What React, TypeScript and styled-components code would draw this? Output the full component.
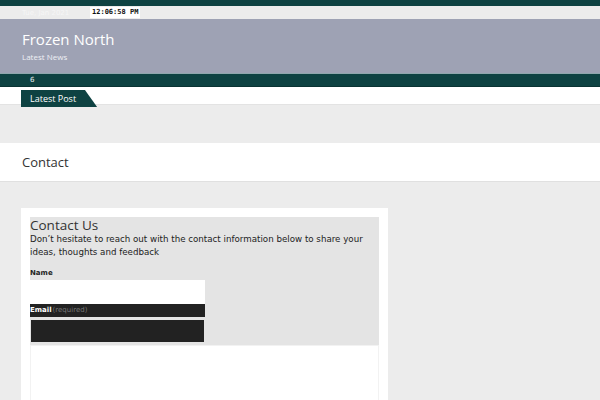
import React from 'react';
import styled, { createGlobalStyle } from 'styled-components';

const GlobalStyle = createGlobalStyle`
    html, body {
        margin: 0;
        padding: 0;
        background: #ececec;
        font-family: "DejaVu Sans", sans-serif;
    }
`;

const TopBar = styled.div`
    height: 6px;
    background: #0e4242;
`;
const InfoStrip = styled.div`
    height: 13px;
    background: #ececec;
    display: flex;
    align-items: center;
    padding-left: 22px;
    font-size: 7px;
    color: #f6f6f6;
`;
const DateText = styled.span`
    width: 68px;
`;
const Clock = styled.span`
    background: #fff;
    color: #111;
    font-family: "DejaVu Sans Mono", monospace;
    font-weight: bold;
    font-size: 7px;
    padding: 0 2px;
    line-height: 11px;
`;
const Header = styled.div`
    background: #9ea2b4;
    height: 55px;
    padding: 0 22px;
    box-sizing: border-box;
    border-bottom: 1px solid #8fa7ad;
`;
const SiteTitle = styled.div`
    font-family: "Open Sans", sans-serif;
    font-size: 15px;
    color: #fff;
    padding-top: 11px;
    line-height: 18px;
`;
const Tagline = styled.div`
    font-family: "Open Sans", sans-serif;
    font-size: 8px;
    color: #eef0f5;
    margin-top: 3px;
`;
const NavBar = styled.div`
    background: #0e4242;
    height: 12px;
    padding-left: 30px;
    font-size: 7px;
    line-height: 12px;
    color: #e8eeee;
    border-bottom: 1px solid #0a3333;
`;
const TabRow = styled.div`
    background: #fff;
    height: 17px;
    padding-left: 21px;
    border-bottom: 1px solid #e3e3e3;
`;
const Tab = styled.div`
    display: inline-block;
    background: #0e4242;
    color: #fff;
    font-family: "Open Sans", sans-serif;
    font-size: 9px;
    line-height: 17px;
    height: 17px;
    padding: 0 21px 0 9px;
    clip-path: polygon(0 0, 84% 0, 100% 100%, 0 100%);
`;
const Spacer = styled.div`
    height: 38px;
`;
const PageTitleBar = styled.div`
    background: #fff;
    height: 38px;
    padding-left: 22px;
    display: flex;
    align-items: center;
    border-bottom: 1px solid #e0e0e0;
    font-family: "Open Sans", sans-serif;
    font-size: 13px;
    color: #333;
`;
const Content = styled.div`
    padding: 26px 21px 0;
`;
const Card = styled.div`
    background: #fff;
    width: 367px;
    padding: 9px 9px 0;
    box-sizing: border-box;
    height: 200px;
`;
const InfoBox = styled.div`
    background: #e4e4e4;
    padding-bottom: 3px;
`;
const CardTitle = styled.div`
    font-family: "Open Sans", sans-serif;
    font-size: 13.5px;
    color: #333;
    line-height: 16px;
`;
const Intro = styled.div`
    font-size: 8.7px;
    line-height: 13px;
    color: #222;
    margin-bottom: 7px;
`;
const Label = styled.div<{ $dark?: boolean }>`
    width: 175px;
    font-size: 7px;
    font-weight: bold;
    line-height: ${(p) => (p.$dark ? '13px' : '14px')};
    background: ${(p) => (p.$dark ? '#222' : 'transparent')};
    color: ${(p) => (p.$dark ? '#fff' : '#222')};
`;
const Required = styled.span`
    font-weight: normal;
    color: #777;
    margin-left: 1px;
`;
const Field = styled.div<{ $dark?: boolean }>`
    width: ${(p) => (p.$dark ? '173px' : '175px')};
    height: ${(p) => (p.$dark ? '22px' : '24px')};
    margin: ${(p) => (p.$dark ? '3px 0 0 1px' : '0')};
    background: ${(p) => (p.$dark ? '#222' : '#fff')};
`;
const TextArea = styled.div`
    height: 60px;
    background: #fff;
    border: 1px solid #f2f2f2;
`;

export default function App() {
    return (
        <>
            <GlobalStyle />
            <TopBar />
            <InfoStrip>
                <DateText>Tue, Jan 2021</DateText>
                <Clock>12:06:58 PM</Clock>
            </InfoStrip>
            <Header>
                <SiteTitle>Frozen North</SiteTitle>
                <Tagline>Latest News</Tagline>
            </Header>
            <NavBar>6</NavBar>
            <TabRow>
                <Tab>Latest Post</Tab>
            </TabRow>
            <Spacer />
            <PageTitleBar>Contact</PageTitleBar>
            <Content>
                <Card>
                    <InfoBox>
                        <CardTitle>Contact Us</CardTitle>
                        <Intro>
                            Don’t hesitate to reach out with the contact information below to share your
                            ideas, thoughts and feedback
                        </Intro>
                        <Label>Name</Label>
                        <Field />
                        <Label $dark>
                            Email<Required>(required)</Required>
                        </Label>
                        <Field $dark />
                    </InfoBox>
                    <TextArea />
                </Card>
            </Content>
        </>
    );
}
